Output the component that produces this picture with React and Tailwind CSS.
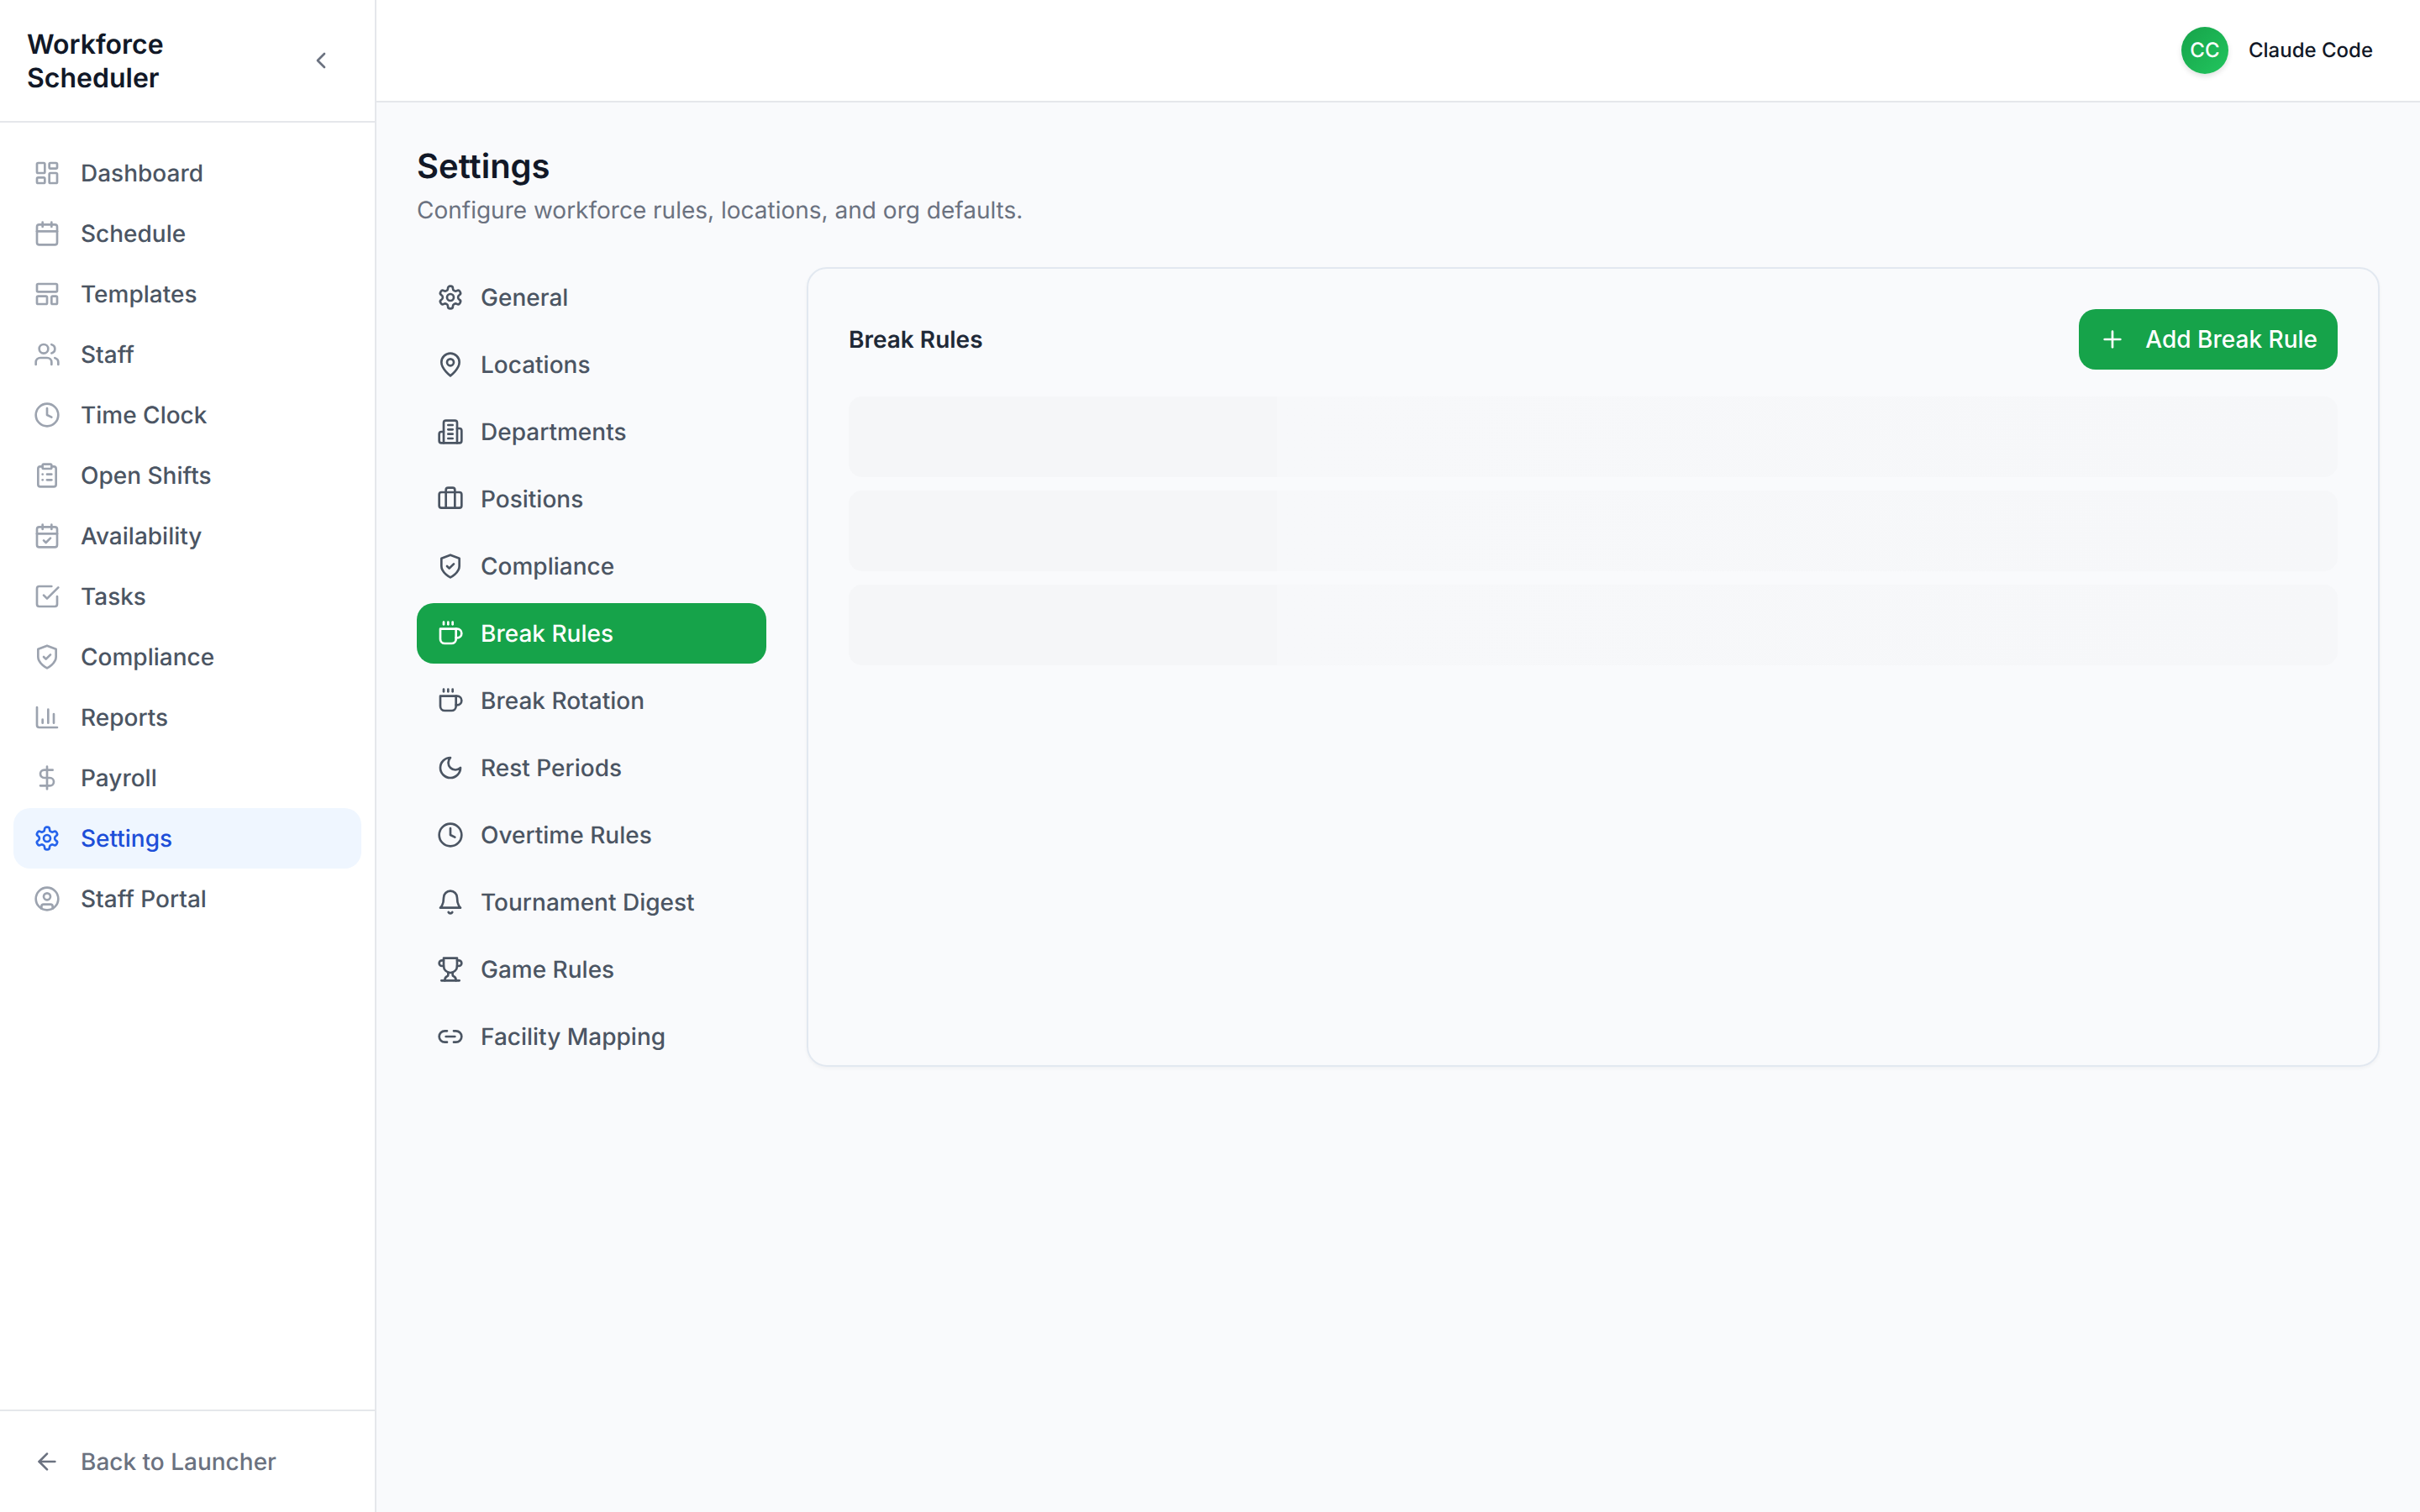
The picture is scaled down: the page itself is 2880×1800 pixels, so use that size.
import {
    ArrowLeft, Briefcase, Calendar, CalendarCheck, ChartColumn, ChevronLeft, CircleUser,
    ClipboardList, Clock, DollarSign, LayoutDashboard, LayoutTemplate, Link2, Plus, Users,
} from 'lucide-react'

// the reference uses an older lucide set, so these few are drawn by hand
function Glyph({ className, children }) {
    return (
        <svg viewBox="0 0 24 24" fill="none" stroke="currentColor" strokeWidth="2" strokeLinecap="round" strokeLinejoin="round" className={className}>
            {children}
        </svg>
    )
}

const Settings = ({ className }) => (
    <Glyph className={className}>
        <path d="M12.22 2h-.44a2 2 0 0 0-2 2v.18a2 2 0 0 1-1 1.73l-.43.25a2 2 0 0 1-2 0l-.15-.08a2 2 0 0 0-2.73.73l-.22.38a2 2 0 0 0 .73 2.73l.15.1a2 2 0 0 1 1 1.72v.51a2 2 0 0 1-1 1.74l-.15.09a2 2 0 0 0-.73 2.73l.22.38a2 2 0 0 0 2.73.73l.15-.08a2 2 0 0 1 2 0l.43.25a2 2 0 0 1 1 1.73V20a2 2 0 0 0 2 2h.44a2 2 0 0 0 2-2v-.18a2 2 0 0 1 1-1.73l.43-.25a2 2 0 0 1 2 0l.15.08a2 2 0 0 0 2.73-.73l.22-.39a2 2 0 0 0-.73-2.73l-.15-.08a2 2 0 0 1-1-1.74v-.5a2 2 0 0 1 1-1.74l.15-.09a2 2 0 0 0 .73-2.73l-.22-.38a2 2 0 0 0-2.73-.73l-.15.08a2 2 0 0 1-2 0l-.43-.25a2 2 0 0 1-1-1.73V4a2 2 0 0 0-2-2z" />
        <circle cx="12" cy="12" r="3" />
    </Glyph>
)

const MapPin = ({ className }) => (
    <Glyph className={className}>
        <path d="M20 10c0 6-8 12-8 12s-8-6-8-12a8 8 0 0 1 16 0Z" />
        <circle cx="12" cy="10" r="3" />
    </Glyph>
)

const Building = ({ className }) => (
    <Glyph className={className}>
        <path d="M6 22V4a2 2 0 0 1 2-2h8a2 2 0 0 1 2 2v18Z" />
        <path d="M6 12H4a2 2 0 0 0-2 2v6a2 2 0 0 0 2 2h2" />
        <path d="M18 9h2a2 2 0 0 1 2 2v9a2 2 0 0 1-2 2h-2" />
        <path d="M10 6h4" />
        <path d="M10 10h4" />
        <path d="M10 14h4" />
        <path d="M10 18h4" />
    </Glyph>
)

const Shield = ({ className }) => (
    <Glyph className={className}>
        <path d="M12 22s8-4 8-10V5l-8-3-8 3v7c0 6 8 10 8 10" />
        <path d="m9 12 2 2 4-4" />
    </Glyph>
)

const Coffee = ({ className }) => (
    <Glyph className={className}>
        <path d="M17 8h1a4 4 0 1 1 0 8h-1" />
        <path d="M3 8h14v9a4 4 0 0 1-4 4H7a4 4 0 0 1-4-4Z" />
        <path d="M6 2v2" />
        <path d="M10 2v2" />
        <path d="M14 2v2" />
    </Glyph>
)

const Moon = ({ className }) => (
    <Glyph className={className}>
        <path d="M12 3a6 6 0 0 0 9 9 9 9 0 1 1-9-9Z" />
    </Glyph>
)

const Bell = ({ className }) => (
    <Glyph className={className}>
        <path d="M6 8a6 6 0 0 1 12 0c0 7 3 9 3 9H3s3-2 3-9" />
        <path d="M10.3 21a1.94 1.94 0 0 0 3.4 0" />
    </Glyph>
)

const Trophy = ({ className }) => (
    <Glyph className={className}>
        <path d="M6 9H4.5a2.5 2.5 0 0 1 0-5H6" />
        <path d="M18 9h1.5a2.5 2.5 0 0 0 0-5H18" />
        <path d="M4 22h16" />
        <path d="M10 14.66V17c0 .55-.47.98-.97 1.21C7.85 18.75 7 20.24 7 22" />
        <path d="M14 14.66V17c0 .55.47.98.97 1.21C16.15 18.75 17 20.24 17 22" />
        <path d="M18 2H6v7a6 6 0 0 0 12 0V2Z" />
    </Glyph>
)

const CheckSquare = ({ className }) => (
    <Glyph className={className}>
        <path d="m9 11 3 3L22 4" />
        <path d="M21 12v7a2 2 0 0 1-2 2H5a2 2 0 0 1-2-2V5a2 2 0 0 1 2-2h11" />
    </Glyph>
)

const mainNav = [
    { label: 'Dashboard', icon: LayoutDashboard },
    { label: 'Schedule', icon: Calendar },
    { label: 'Templates', icon: LayoutTemplate },
    { label: 'Staff', icon: Users },
    { label: 'Time Clock', icon: Clock },
    { label: 'Open Shifts', icon: ClipboardList },
    { label: 'Availability', icon: CalendarCheck },
    { label: 'Tasks', icon: CheckSquare },
    { label: 'Compliance', icon: Shield },
    { label: 'Reports', icon: ChartColumn },
    { label: 'Payroll', icon: DollarSign },
    { label: 'Settings', icon: Settings, active: true },
    { label: 'Staff Portal', icon: CircleUser },
]

const settingsNav = [
    { label: 'General', icon: Settings },
    { label: 'Locations', icon: MapPin },
    { label: 'Departments', icon: Building },
    { label: 'Positions', icon: Briefcase },
    { label: 'Compliance', icon: Shield },
    { label: 'Break Rules', icon: Coffee, active: true },
    { label: 'Break Rotation', icon: Coffee },
    { label: 'Rest Periods', icon: Moon },
    { label: 'Overtime Rules', icon: Clock },
    { label: 'Tournament Digest', icon: Bell },
    { label: 'Game Rules', icon: Trophy },
    { label: 'Facility Mapping', icon: Link2 },
]

function Sidebar() {
    return (
        <aside className="flex w-[448px] shrink-0 flex-col border-r-2 border-[#e5e7eb] bg-white">
            <div className="flex h-[146px] items-center justify-between border-b-2 border-[#e5e7eb] pl-[32px] pr-[48px]">
                <h1 className="w-[220px] pt-[2px] text-[32px] font-semibold leading-[40px] text-[#111827]">Workforce Scheduler</h1>
                <ChevronLeft className="size-[32px] text-[#6b7280]" />
            </div>

            <nav className="flex flex-col px-[16px] pt-[24px]">
                {mainNav.map(item => (
                    <a
                        key={item.label}
                        className={`flex h-[72px] items-center gap-[24px] rounded-[20px] pl-[24px] text-[28px] font-medium ${item.active ? 'bg-[#eff6ff] text-[#1d4ed8]' : 'text-[#4b5563]'}`}
                    >
                        <item.icon className={`size-[32px] ${item.active ? 'text-[#2563eb]' : 'text-[#9ca3af]'}`} />
                        {item.label}
                    </a>
                ))}
            </nav>

            <div className="mt-auto flex h-[122px] items-center gap-[24px] border-t-2 border-[#e5e7eb] pl-[40px] text-[28px] font-medium text-[#6b7280]">
                <ArrowLeft className="size-[32px]" />
                Back to Launcher
            </div>
        </aside>
    )
}

function SettingsNav() {
    return (
        <div className="flex w-[416px] shrink-0 flex-col gap-[8px]">
            {settingsNav.map(item => (
                <a
                    key={item.label}
                    className={`flex h-[72px] items-center gap-[20px] rounded-[20px] pl-[24px] text-[28px] font-medium ${item.active ? 'bg-[#16a34a] text-white' : 'text-[#4b5563]'}`}
                >
                    <item.icon className="size-[32px]" />
                    {item.label}
                </a>
            ))}
        </div>
    )
}

function SkeletonRow() {
    return <div className="h-[96px] rounded-[16px] bg-[linear-gradient(90deg,#f5f6f8_28.8%,#f7f8fa_28.8%,#f6f7f9_100%)]" />
}

export default function App() {
    return (
        <div className="flex h-screen bg-[#f9fafc] font-['Inter',sans-serif] antialiased [text-rendering:geometricPrecision]">
            <Sidebar />

            <main className="flex min-w-0 flex-1 flex-col">
                <header className="flex h-[122px] items-center justify-end gap-[24px] border-b-2 border-[#e5e7eb] bg-white pr-[56px]">
                    <div className="flex size-[56px] items-center justify-center rounded-full bg-gradient-to-br from-[#16a34a] to-[#22c55e] text-[24px] font-medium text-white shadow-[0_3px_6px_rgba(0,0,0,0.12)]">
                        CC
                    </div>
                    <span className="text-[24px] font-medium text-[#111827]">Claude Code</span>
                </header>

                <div className="flex flex-col px-[48px] pt-[48px]">
                    <h2 className="text-[40px] font-semibold leading-[56px] text-[#111827]">Settings</h2>
                    <p className="mt-[4px] text-[28px] leading-[40px] text-[#6b7280]">Configure workforce rules, locations, and org defaults.</p>

                    <div className="mt-[48px] flex gap-[48px]">
                        <SettingsNav />

                        <section className="flex-1 rounded-[24px] border-2 border-[#e2e8f0] p-[48px] shadow-[0_2px_4px_rgba(0,0,0,0.04)]">
                            <div className="mb-[32px] flex items-center justify-between">
                                <h3 className="text-[28px] font-semibold text-[#1f2937]">Break Rules</h3>
                                <button className="flex h-[72px] items-center gap-[23px] rounded-[20px] bg-[#16a34a] px-[24px] text-[28px] font-medium text-white">
                                    <Plus className="size-[32px]" />
                                    Add Break Rule
                                </button>
                            </div>
                            <div className="flex flex-col gap-[16px]">
                                <SkeletonRow />
                                <SkeletonRow />
                                <SkeletonRow />
                            </div>
                        </section>
                    </div>
                </div>
            </main>
        </div>
    )
}
